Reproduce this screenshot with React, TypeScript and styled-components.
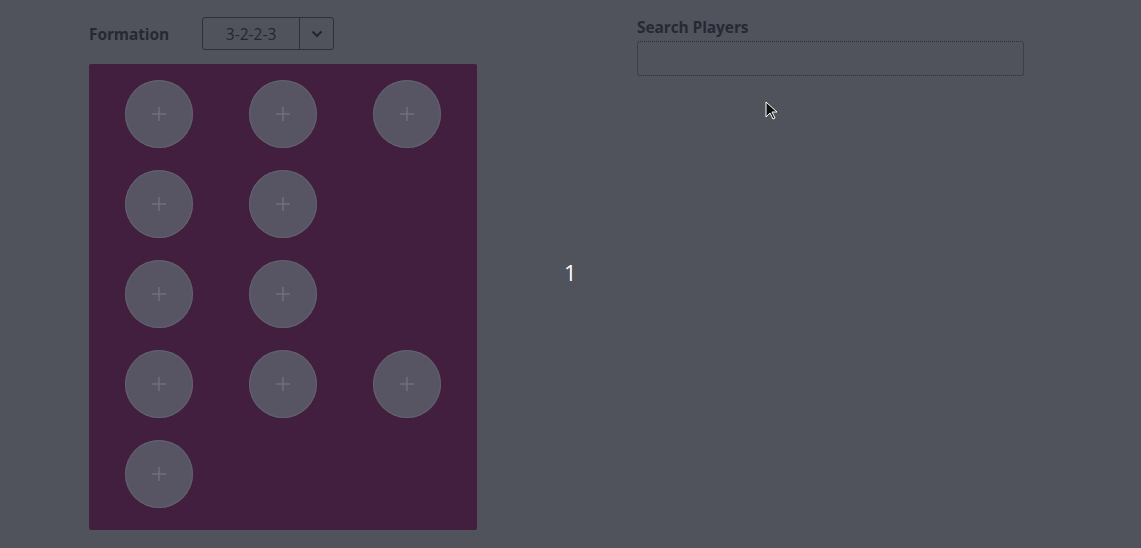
import React from "react";
import styled, { createGlobalStyle } from "styled-components";

const Global = createGlobalStyle`
  html, body { margin: 0; padding: 0; background: #50535b; }
  body { font-family: "Open Sans", "DejaVu Sans", sans-serif; }
  #root { min-height: 548px; }
`;

const Page = styled.div`
  position: relative;
  width: 1141px;
  height: 548px;
  background: #50535b;
  display: flex;
  align-items: flex-start;
  padding: 17px 0 0 89px;
  box-sizing: border-box;
`;

const LeftCol = styled.div`
  width: 388px;
  display: flex;
  flex-direction: column;
  gap: 14px;
`;

const FormationRow = styled.div`
  display: flex;
  align-items: center;
  gap: 33px;
  height: 33px;
`;

const Label = styled.span`
  font-weight: 700;
  font-size: 15.5px;
  color: #262934;
  letter-spacing: -0.1px;
`;

const Select = styled.div`
  display: flex;
  width: 132px;
  height: 33px;
  box-sizing: border-box;
  border: 1.5px solid #2d303b;
  border-radius: 3px;
`;

const SelectValue = styled.div`
  flex: 1;
  display: flex;
  align-items: center;
  justify-content: center;
  font-size: 15.5px;
  color: #24262f;
  border-right: 1.5px solid #2d303b;
`;

const SelectArrow = styled.div`
  width: 33px;
  display: flex;
  align-items: center;
  justify-content: center;
  color: #24262f;
`;

const Pitch = styled.div`
  width: 388px;
  height: 466px;
  background: #421f3f;
  border-radius: 2px;
  box-sizing: border-box;
  padding: 16px 36px 0;
  display: flex;
  flex-direction: column;
  gap: 22px;
`;

const Row = styled.div`
  display: flex;
  gap: 56px;
`;

const Slot = styled.div`
  width: 68px;
  height: 68px;
  border-radius: 50%;
  background: #575563;
  box-shadow: inset 0 0 0 1px #62626d;
  display: flex;
  align-items: center;
  justify-content: center;
  color: #6f707c;
`;

const Middle = styled.div`
  width: 160px;
  padding-top: 244px;
  padding-left: 87px;
  box-sizing: border-box;
  font-size: 22px;
  line-height: 1;
  color: #ffffff;
  font-family: "Open Sans", sans-serif;
`;

const RightCol = styled.div`
  width: 387px;
  display: flex;
  flex-direction: column;
  gap: 3px;
  margin-top: -1px;
`;

const Input = styled.div`
  height: 35px;
  box-sizing: border-box;
  border: 1px dotted #2a2c36;
  border-radius: 3px;
`;

const Cursor = styled.svg`
  position: absolute;
  left: 765px;
  top: 101px;
`;

const Plus = () => (
  <svg width="16" height="16" viewBox="0 0 16 16">
    <path d="M8 1v14M1 8h14" stroke="currentColor" strokeWidth="1.5" />
  </svg>
);

const layout = [3, 2, 2, 3, 1];

export default function App() {
  return (
    <>
      <Global />
      <Page>
        <LeftCol>
          <FormationRow>
            <Label>Formation</Label>
            <Select>
              <SelectValue>3-2-2-3</SelectValue>
              <SelectArrow>
                <svg width="12" height="8" viewBox="0 0 12 8">
                  <path d="M1.5 1.5l4.5 4.5 4.5-4.5" fill="none" stroke="currentColor" strokeWidth="2" />
                </svg>
              </SelectArrow>
            </Select>
          </FormationRow>
          <Pitch>
            {layout.map((n, i) => (
              <Row key={i}>
                {Array.from({ length: n }).map((_, j) => (
                  <Slot key={j}>
                    <Plus />
                  </Slot>
                ))}
              </Row>
            ))}
          </Pitch>
        </LeftCol>
        <Middle>1</Middle>
        <RightCol>
          <Label>Search Players</Label>
          <Input />
        </RightCol>
        <Cursor width="14" height="20" viewBox="0 0 14 20">
          <path d="M1 1v15l4-4 3 6 2-1-3-6h5z" fill="#111" stroke="#fff" strokeWidth="1" />
        </Cursor>
      </Page>
    </>
  );
}
